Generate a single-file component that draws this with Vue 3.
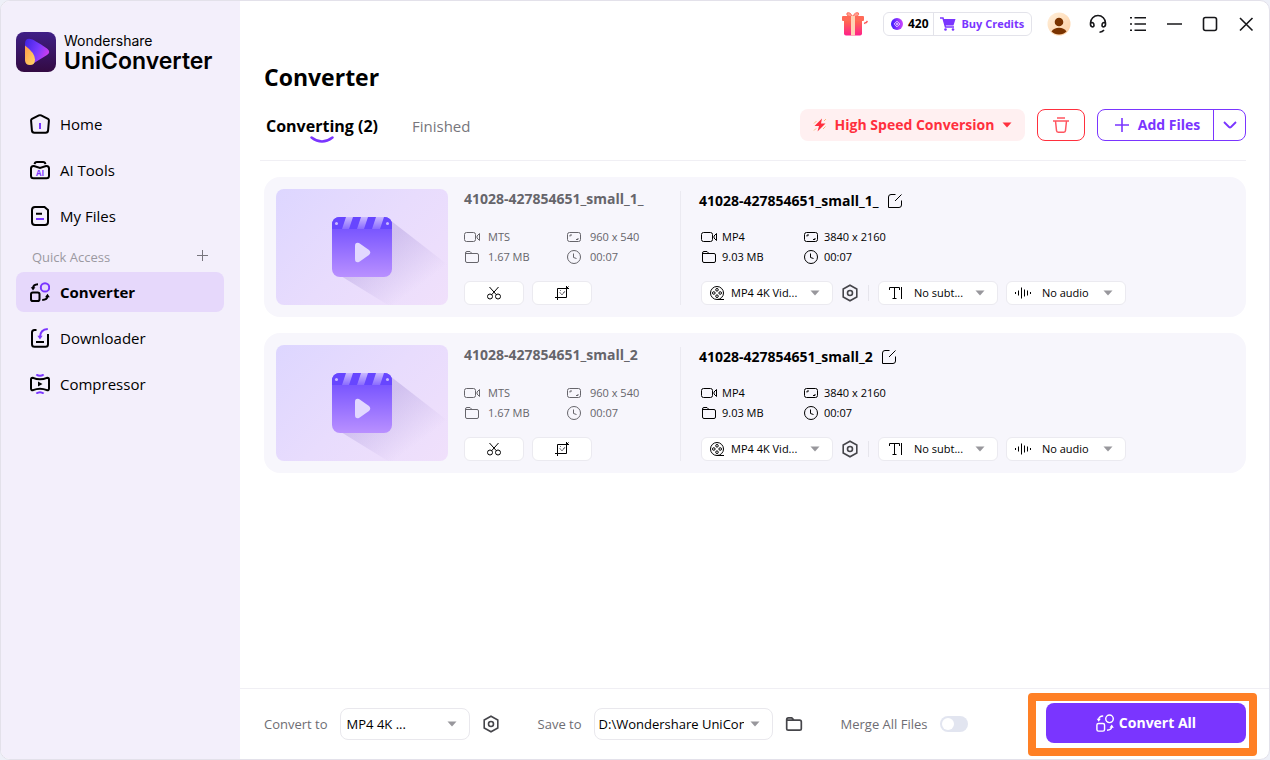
<template>
    <svg class="sprite" width="0" height="0" aria-hidden="true">
        <defs>
            <linearGradient id="g_logo_bg" x1="0" y1="0" x2="0" y2="1">
                <stop offset="0" stop-color="#3f1f86" />
                <stop offset="1" stop-color="#330a42" />
            </linearGradient>
            <linearGradient id="g_logo_play" x1="0" y1="0" x2="1" y2="0.4">
                <stop offset="0" stop-color="#3d22e0" />
                <stop offset="0.6" stop-color="#7a3bff" />
                <stop offset="1" stop-color="#c63df0" />
            </linearGradient>
            <linearGradient id="g_logo_leaf" x1="0" y1="0" x2="1" y2="1">
                <stop offset="0" stop-color="#ff9a4a" />
                <stop offset="1" stop-color="#ffd768" />
            </linearGradient>
            <linearGradient id="g_gift" x1="0" y1="0" x2="0" y2="1">
                <stop offset="0" stop-color="#ff6a50" />
                <stop offset="1" stop-color="#ff1f8a" />
            </linearGradient>
            <linearGradient id="g_coin" x1="0" y1="0" x2="1" y2="0">
                <stop offset="0" stop-color="#3a1cff" />
                <stop offset="1" stop-color="#d045ff" />
            </linearGradient>
            <linearGradient id="g_clap" x1="0" y1="0" x2="0" y2="1">
                <stop offset="0" stop-color="#6a48ff" />
                <stop offset="1" stop-color="#b990ff" />
            </linearGradient>
            <linearGradient id="g_strip" x1="0" y1="0" x2="0" y2="1">
                <stop offset="0" stop-color="#c9b8ff" />
                <stop offset="1" stop-color="#8a6bff" />
            </linearGradient>
            <linearGradient id="g_shadow" x1="0" y1="0" x2="1" y2="1">
                <stop offset="0.35" stop-color="#8a70c8" stop-opacity="0.26" />
                <stop offset="0.76" stop-color="#8a70c8" stop-opacity="0" />
            </linearGradient>
            <linearGradient id="g_avatar" x1="0" y1="0" x2="1" y2="1">
                <stop offset="0" stop-color="#fff0dc" />
                <stop offset="1" stop-color="#ffcfa0" />
            </linearGradient>
        </defs>
        <symbol id="i_home" viewBox="0 0 20 20">
            <path d="M8.9 1.4 2 4.9Q1 5.5 1.1 6.8L1.9 16.4Q2.1 18.8 4.4 18.8H15.6Q17.9 18.8 18.1 16.4L18.9 6.8Q19 5.5 18 4.9L11.1 1.4Q10 .9 8.9 1.4Z" />
            <path class="violet" d="M10 9V15" />
        </symbol>
        <symbol id="i_ai" viewBox="0 0 20 20">
            <path d="M4 6H3.5Q1 6 1 8.5V15.7Q1 18.2 3.5 18.2H16.5Q19 18.2 19 15.7V8.5Q19 6 16.5 6H16L10 8 4 6Z" />
            <path d="M4.6 4.2Q4.8 2 7 2H13Q15.2 2 15.4 4.2" />
        </symbol>
        <symbol id="i_files" viewBox="0 0 20 20">
            <path d="M5 1H14.5L18 4V16Q18 19 15 19H5Q2 19 2 16V4Q2 1 5 1Z" />
            <path d="M6 7.8H12" />
            <path class="violet" d="M6 13H14" />
        </symbol>
        <symbol id="i_convert" viewBox="0 0 20 20">
            <rect x="1" y="10.5" width="8.5" height="8.5" rx="1.8" />
            <circle class="violet" cx="15" cy="5.4" r="4.2" />
            <path d="M3 6Q3.2 2.4 8 2.2M17.5 14.5Q17.2 17.8 12.2 18" />
            <path class="solid" d="M.8 5.2H5.4L3 8.6ZM15 15.2H19.8L17.5 11.8Z" />
        </symbol>
        <symbol id="i_download" viewBox="0 0 20 20">
            <path d="M6.5 2H4.5Q2 2 2 4.5V16.3Q2 18.8 4.5 18.8H15.5Q18 18.8 18 16.3V6" />
            <path d="M6 14H14" />
            <path class="violet" d="M17.8 1Q10.2 1.5 10 9" />
            <path class="violet_solid" d="M7.4 7.8H12.6L10 11.5Z" />
        </symbol>
        <symbol id="i_compress" viewBox="0 0 20 20">
            <path d="M3 3.8Q10 6.8 17 3.8Q19 3.6 19 5.5V14.5Q19 16.4 17 16.2Q10 13.2 3 16.2Q1 16.4 1 14.5V5.5Q1 3.6 3 3.8Z" />
            <path class="violet" d="M6.3 .5Q10 3.2 13.7 .5M6.3 19.5Q10 16.8 13.7 19.5" />
            <path class="solid" d="M8 7.5V12.500L12.500 10Z" />
        </symbol>
        <symbol id="i_video" viewBox="0 0 16 16">
            <rect x=".5" y="3.5" width="11" height="9" rx="2" />
            <path d="M13 7 15.5 4.5V11.5L13 9Z" />
        </symbol>
        <symbol id="i_folder" viewBox="0 0 16 16">
            <path d="M1.5 12V4Q1.5 2.5 3 2.5H6L8 4.5H13Q14.5 4.5 14.5 6V12Q14.5 13.5 13 13.5H3Q1.5 13.5 1.5 12ZM1.5 4.5H8" />
        </symbol>
        <symbol id="i_ratio" viewBox="0 0 16 16">
            <rect x="1.5" y="3.5" width="13" height="9" rx="2" />
            <path d="M4 7.5V6H6M10 10.5H12V9" />
        </symbol>
        <symbol id="i_clock" viewBox="0 0 16 16">
            <circle cx="8" cy="8" r="6.5" />
            <path d="M7.5 4.5V8.5L10.5 9.5" />
        </symbol>
        <symbol id="i_cut" viewBox="0 0 16 16">
            <circle cx="4" cy="11.5" r="2.5" />
            <circle cx="12" cy="11.5" r="2.5" />
            <path d="M3.5 2 10.3 9.7M12.5 2 5.7 9.7" />
        </symbol>
        <symbol id="i_crop" viewBox="0 0 16 16">
            <path d="M3.5 3.5H12.5V12.5H3.5ZM12.5 1V3.5H15M1 12.5H3.5V15M12.5 3.5 14.5 1.5" />
            <path class="faint" d="M5.5 7 8 10 11 6M6 5.5H7M9 7.5H10.5" />
        </symbol>
        <symbol id="i_edit" viewBox="0 0 16 16">
            <path d="M8.5 1.5H4Q1.5 1.5 1.5 4V14.5H12Q14.5 14.5 14.5 12V7.5M8 8 14.5 1.5" />
        </symbol>
        <symbol id="i_reel" viewBox="0 0 16 16">
            <circle cx="8" cy="8" r="6.5" />
            <circle cx="8" cy="4.8" r="1.3" />
            <circle cx="8" cy="11.2" r="1.3" />
            <circle cx="4.8" cy="8" r="1.3" />
            <circle cx="11.2" cy="8" r="1.3" />
            <path d="M8 14.5H15" />
        </symbol>
        <symbol id="i_title" viewBox="0 0 22 16">
            <path d="M3.5 5V2.5H13.5V5M8.5 2.5V13.5M6.5 13.5H10.5M15.5 2V14" />
        </symbol>
        <symbol id="i_wave" viewBox="0 0 22 16">
            <path d="M1.5 7V9M4.5 5.5V10.5M7.5 2.5V13.5M10.5 4.5V11.5M13.5 5.5V10.5M16.5 7V9" />
        </symbol>
        <symbol id="i_gear" viewBox="0 0 18 18">
            <path d="M9 1.2 15.8 5V13L9 16.8 2.2 13V5Z" />
            <circle cx="9" cy="9" r="2.5" />
        </symbol>
        <symbol id="i_caret" viewBox="0 0 10 6">
            <path d="M.5 .5H9.5L5 5.5Z" />
        </symbol>
    </svg>

    <div class="window">
        <aside class="sidebar">
            <div class="brand">
                <svg width="40" height="40" viewBox="0 0 40 40">
                    <rect width="40" height="40" rx="8" fill="url(#g_logo_bg)" />
                    <path d="M9 12Q9 6 14.500 7Q17 7 31 16.500Q35.500 20 31 23L18 31Q12 33 9 28Z" fill="url(#g_logo_play)" />
                    <path d="M9 13.500Q19 21 19 27.500Q19 33 14 33Q9 33 9 28Z" fill="url(#g_logo_leaf)" />
                </svg>
                <div class="brand_text">
                    <span>Wondershare</span>
                    <strong>UniConverter</strong>
                </div>
            </div>
            <nav>
                <a v-for="item in main_nav" :key="item.label" href="#" class="nav_item">
                    <svg class="nav_icon" viewBox="0 0 20 20">
                        <use :href="item.icon" />
                        <text v-if="item.mark" x="10" y="16" text-anchor="middle">{{ item.mark }}</text>
                    </svg>
                    {{ item.label }}
                </a>
                <div class="quick">
                    <span>Quick Access</span>
                    <button type="button" aria-label="Add">
                        <svg width="11" height="11" viewBox="0 0 11 11"><path d="M5.5 0V11M0 5.5H11" stroke="#77757d" /></svg>
                    </button>
                </div>
                <a
                v-for="item in quick_nav"
                :key="item.label"
                href="#"
                class="nav_item"
                :class="{ active: item.label == current }"
                @click.prevent="current = item.label"
                >
                    <svg class="nav_icon"><use :href="item.icon" /></svg>
                    {{ item.label }}
                </a>
            </nav>
        </aside>

        <main class="main">
            <header class="topbar">
                <button type="button" class="gift" aria-label="Gifts">
                    <svg width="28" height="26" viewBox="0 0 28 26">
                        <path d="M12.500 5.500Q6 6 7 2Q10 .5 12.500 5.500Q15.500 .5 18.500 2Q19.500 6 12.500 5.500" fill="#ff9c8c" stroke="#ff6c5c" />
                        <rect x="2" y="5" width="22" height="5" rx="1" fill="#ff6a58" />
                        <path d="M4 10H22V22.500Q22 24.500 20 24.500H6Q4 24.500 4 22.500Z" fill="url(#g_gift)" />
                        <path d="M11 5H15V24.500H11Z" fill="#ffd2b4" />
                        <path d="M24.500 13 25.500 11M26 12 27.500 10" stroke="#ff5a5a" stroke-width="1.500" />
                    </svg>
                </button>
                <div class="credits">
                    <span class="balance">
                        <svg width="12" height="12" viewBox="0 0 12 12">
                            <circle cx="6" cy="6" r="6" fill="url(#g_coin)" />
                            <path d="M6 3.200 8.800 6 6 8.800 3.200 6Z" fill="none" stroke="#e4d4ff" />
                            <circle cx="6" cy="6" r="1" fill="#e4d4ff" />
                        </svg>
                        420
                    </span>
                    <button type="button" class="buy">
                        <svg width="16" height="14" viewBox="0 0 16 14">
                            <path d="M0 1H3L5.500 10H14" fill="none" stroke="#7a35ff" stroke-width="1.500" />
                            <path d="M3.200 2H15.500L13.500 8.500H5Z" fill="#7a35ff" />
                            <circle cx="5.500" cy="12.500" r="1.300" fill="#7a35ff" />
                            <circle cx="13" cy="12.500" r="1.300" fill="#7a35ff" />
                        </svg>
                        Buy Credits
                    </button>
                </div>
                <button type="button" aria-label="Account">
                    <svg width="24" height="24" viewBox="0 0 24 24">
                        <circle cx="12" cy="12" r="11.500" fill="url(#g_avatar)" />
                        <circle cx="12" cy="10" r="4.300" fill="#7a3300" />
                        <path d="M4.500 19.500Q7 15.800 12 15.800T19.500 19.500Q16.500 22.500 12 22.500T4.500 19.500Z" fill="#7a3300" />
                    </svg>
                </button>
                <div class="window_actions">
                    <button type="button" aria-label="Support">
                        <svg class="line" width="24" height="20" viewBox="0 0 24 20">
                            <path d="M4.500 11V9A7.500 7.500 0 0 1 19.500 9V11M4.500 9Q8 7.500 8 11.500Q7.500 13.500 5.500 12.500Q4.200 11.500 4.500 9M19.500 9Q16 7.500 16 11.500Q16.500 13.500 18.500 12.500Q19.800 11.500 19.500 9M18 16Q16.500 18 13.500 18.200" />
                        </svg>
                    </button>
                    <button type="button" aria-label="Menu">
                        <svg class="line" width="16" height="16" viewBox="0 0 16 16"><path d="M4.500 1.800H16M4.500 8H16M4.500 14.200H16M0 1.800H2M0 8H2M0 14.200H2" /></svg>
                    </button>
                    <button type="button" aria-label="Minimize">
                        <svg class="line" width="16" height="16" viewBox="0 0 16 16"><path d="M1 8H16" /></svg>
                    </button>
                    <button type="button" aria-label="Maximize">
                        <svg class="line" width="16" height="16" viewBox="0 0 16 16"><rect x="1.500" y="1.500" width="13" height="13" rx="2" /></svg>
                    </button>
                    <button type="button" aria-label="Close">
                        <svg class="line" width="16" height="16" viewBox="0 0 16 16"><path d="M2 2 14.500 14.500M14.500 2 2 14.500" /></svg>
                    </button>
                </div>
            </header>

            <section class="content">
                <h1>Converter</h1>
                <div class="toolbar">
                    <div class="tabs">
                        <button type="button" class="tab selected">
                            Converting (2)
                            <svg class="smile" width="24" height="8" viewBox="0 0 24 8"><path d="M1.500 1.500Q12 9.500 22.500 1.500" /></svg>
                        </button>
                        <button type="button" class="tab">Finished</button>
                    </div>
                    <div class="actions">
                        <button type="button" class="speed">
                            <svg width="14" height="14" viewBox="0 0 14 14">
                                <path d="M9 .5 1.500 8H6L4.500 13.500 12.500 5.500H8Z" fill="#ff2f3d" />
                                <path d="M1 5.500 3.500 3M10 11 12.500 8.500M1 12.500 3 10.500M11 3 13 1" stroke="#f6bd7b" />
                            </svg>
                            High Speed Conversion
                            <svg width="10" height="6"><use href="#i_caret" /></svg>
                        </button>
                        <button type="button" class="trash" aria-label="Delete all">
                            <svg width="16" height="16" viewBox="0 0 16 16">
                                <path d="M0 4H16M4 1H12M2.500 4 3.500 13.500Q3.600 15.200 5.200 15.200H10.800Q12.400 15.200 12.500 13.500L13.500 4" fill="none" stroke="#ff5560" stroke-width="1.500" />
                            </svg>
                        </button>
                        <div class="add">
                            <button type="button" class="add_files">
                                <svg width="14" height="14" viewBox="0 0 14 14"><path d="M7 0V14M0 7H14" stroke="#7a35ff" stroke-width="1.600" /></svg>
                                Add Files
                            </button>
                            <button type="button" class="add_more" aria-label="More sources">
                                <svg width="14" height="8" viewBox="0 0 14 8"><path d="M1 1 6 6Q7 7 8 6L13 1" fill="none" stroke="#7a35ff" stroke-width="1.800" /></svg>
                            </button>
                        </div>
                    </div>
                </div>

                <article v-for="(file, index) in files" :key="file.name" class="card">
                    <svg class="thumb" width="172" height="116" viewBox="0 0 172 116">
                        <path d="M114 31 172 76V116H112L60 84Z" fill="url(#g_shadow)" />
                        <rect x="56" y="28" width="60" height="60" rx="8" fill="url(#g_clap)" />
                        <path d="M56 40V36Q56 28 64 28H108Q116 28 116 36V40Z" fill="#6746ff" />
                        <path d="M70 28H77L73 40H66ZM85 28H92L88 40H81ZM100 28H108L104 40H96Z" fill="url(#g_strip)" />
                        <circle cx="60.500" cy="34.500" r="1.500" fill="#c9b8ff" />
                        <circle cx="111.500" cy="34.500" r="1.500" fill="#c9b8ff" />
                        <path d="M79 57Q79 53 83 54L93 61Q95.500 63.500 93 66L83 73Q79 74 79 70Z" fill="#e2d8ff" />
                    </svg>
                    <div class="source">
                        <h2>{{ file.name }}</h2>
                        <ul class="meta">
                            <li v-for="row in file.source" :key="row.icon">
                                <svg><use :href="row.icon" /></svg>{{ row.text }}
                            </li>
                        </ul>
                        <div class="controls">
                            <button type="button" class="tool" aria-label="Trim"><svg><use href="#i_cut" /></svg></button>
                            <button type="button" class="tool" aria-label="Crop"><svg><use href="#i_crop" /></svg></button>
                        </div>
                    </div>
                    <div class="target">
                        <h2>
                            {{ file.name }}
                            <button type="button" aria-label="Rename"><svg><use href="#i_edit" /></svg></button>
                        </h2>
                        <ul class="meta">
                            <li v-for="row in file.target" :key="row.icon">
                                <svg><use :href="row.icon" /></svg>{{ row.text }}
                            </li>
                        </ul>
                        <div class="controls">
                            <label class="picker format" :for="'format_' + index">
                                <svg><use href="#i_reel" /></svg>
                                <select :id="'format_' + index" aria-label="Format"><option>MP4 4K Vid...</option></select>
                                <svg class="caret"><use href="#i_caret" /></svg>
                            </label>
                            <button type="button" class="gear" aria-label="Format settings"><svg><use href="#i_gear" /></svg></button>
                            <span class="separator"></span>
                            <label class="picker" :for="'subtitle_' + index">
                                <svg class="wide"><use href="#i_title" /></svg>
                                <select :id="'subtitle_' + index" aria-label="Subtitle"><option>No subt...</option></select>
                                <svg class="caret"><use href="#i_caret" /></svg>
                            </label>
                            <label class="picker" :for="'audio_' + index">
                                <svg class="wide"><use href="#i_wave" /></svg>
                                <select :id="'audio_' + index" aria-label="Audio"><option>No audio</option></select>
                                <svg class="caret"><use href="#i_caret" /></svg>
                            </label>
                        </div>
                    </div>
                </article>
            </section>

            <footer class="bottom">
                <div class="field">
                    <label for="convert_to">Convert to</label>
                    <div class="dropdown">
                        <select id="convert_to"><option>MP4 4K ...</option></select>
                        <svg class="caret"><use href="#i_caret" /></svg>
                    </div>
                    <button type="button" class="gear" aria-label="Output settings"><svg><use href="#i_gear" /></svg></button>
                </div>
                <div class="field">
                    <label for="save_to">Save to</label>
                    <div class="dropdown path">
                        <select id="save_to"><option>D:\Wondershare UniConverter</option></select>
                        <svg class="caret"><use href="#i_caret" /></svg>
                    </div>
                    <button type="button" class="open" aria-label="Open folder"><svg><use href="#i_folder" /></svg></button>
                </div>
                <div class="field">
                    <label for="merge">Merge All Files</label>
                    <input id="merge" v-model="merge" type="checkbox" class="toggle">
                </div>
                <div class="convert_wrap">
                    <button type="button" class="convert_all">
                        <svg class="nav_icon"><use href="#i_convert" /></svg>
                        Convert All
                    </button>
                    <span class="highlight"></span>
                </div>
            </footer>
        </main>
    </div>
</template>

<script setup>
import { ref } from 'vue'


const current = ref('Converter')
const merge = ref(false)

const main_nav = [
    { label: 'Home', icon: '#i_home' },
    { label: 'AI Tools', icon: '#i_ai', mark: 'AI' },
    { label: 'My Files', icon: '#i_files' },
]
const quick_nav = [
    { label: 'Converter', icon: '#i_convert' },
    { label: 'Downloader', icon: '#i_download' },
    { label: 'Compressor', icon: '#i_compress' },
]

const meta = (format, ratio, size, time) => [
    { icon: '#i_video', text: format },
    { icon: '#i_ratio', text: ratio },
    { icon: '#i_folder', text: size },
    { icon: '#i_clock', text: time },
]
const files = ['41028-427854651_small_1_', '41028-427854651_small_2'].map(name => ({
    name,
    source: meta('MTS', '960 x 540', '1.67 MB', '00:07'),
    target: meta('MP4', '3840 x 2160', '9.03 MB', '00:07'),
}))
</script>

<style>
body {
    margin: 0;
    background: #eef0f8;
}
</style>

<style scoped>
.sprite {
    position: absolute;
}
.sprite .violet {
    stroke: var(--accent, #7a35ff);
}
.sprite .solid {
    fill: currentColor;
    stroke: none;
}
.sprite .violet_solid {
    fill: #7a35ff;
    stroke: none;
}
.sprite .faint {
    stroke: #77767c;
}
.window {
    display: flex;
    box-sizing: border-box;
    height: 100vh;
    overflow: hidden;
    border: 1px solid #e3e1ea;
    border-radius: 10px;
    background: white;
    color: black;
    font: 14px/20px "Open Sans", "Noto Sans", sans-serif;
}
button {
    display: flex;
    align-items: center;
    justify-content: center;
    box-sizing: border-box;
    margin: 0;
    padding: 0;
    border: 0;
    background: none;
    color: inherit;
    font: inherit;
    white-space: nowrap;
    cursor: pointer;
}
svg {
    flex: none;
    display: block;
}
select {
    appearance: none;
    flex: 1;
    min-width: 0;
    padding: 0;
    border: 0;
    outline: 0;
    background: none;
    color: black;
    font: inherit;
}
.sidebar {
    flex: none;
    box-sizing: border-box;
    width: 239px;
    padding: 31px 16px 0 15px;
    background: #f3effb;
}
.brand {
    display: flex;
    gap: 8px;
    margin-bottom: 32px;
}
.brand_text {
    display: flex;
    flex-direction: column;
    font-family: Inter, sans-serif;
}
.brand_text span {
    font-size: 14px;
    line-height: 18px;
}
.brand_text strong {
    font-size: 23px;
    line-height: 22px;
    font-weight: 600;
}
.nav_item {
    display: flex;
    align-items: center;
    gap: 10px;
    height: 40px;
    padding-left: 14px;
    border-radius: 8px;
    color: black;
    font-size: 15px;
    text-decoration: none;
}
.nav_item + .nav_item {
    margin-top: 6px;
}
.nav_item.active {
    background: #e6d8fb;
    font-weight: bold;
}
.nav_icon {
    width: 20px;
    height: 20px;
    fill: none;
    stroke: currentColor;
    stroke-width: 2;
}
.nav_icon text {
    font: bold 8px "Open Sans", sans-serif;
    fill: #7a35ff;
    stroke: none;
}
.quick {
    display: flex;
    align-items: center;
    justify-content: space-between;
    box-sizing: border-box;
    height: 36px;
    padding: 6px 16px 0;
    color: #9b99a1;
    font-size: 13px;
}
.quick button {
    padding-bottom: 4px;
}
.main {
    flex: 1;
    display: flex;
    flex-direction: column;
    min-width: 0;
}
.topbar {
    display: flex;
    align-items: center;
    justify-content: flex-end;
    gap: 15px;
    height: 46px;
    padding-right: 15px;
}
.credits {
    display: flex;
    box-sizing: border-box;
    width: 149px;
    height: 24px;
    border: 1px solid #e3e3ea;
    border-radius: 6px;
    font-size: 12px;
    font-weight: bold;
}
.balance {
    display: flex;
    align-items: center;
    gap: 5px;
    padding: 0 4px 0 7px;
    border-right: 1px solid #e3e3ea;
}
.buy {
    flex: 1;
    gap: 5px;
    color: #7a35ff;
    font-size: 11px;
}
.window_actions {
    display: flex;
    align-items: center;
    gap: 20px;
}
.line {
    fill: none;
    stroke: #17171a;
    stroke-width: 1.6;
}
.content {
    flex: 1;
    min-height: 0;
    padding: 14px 23px 0 24px;
}
h1 {
    margin: 0;
    font-size: 23px;
    line-height: 32px;
}
.toolbar {
    display: flex;
    align-items: center;
    justify-content: space-between;
    margin: 16px 0 16px -4px;
    padding: 0 0 19px 6px;
    border-bottom: 1px solid #f0eff4;
}
.tabs {
    display: flex;
    gap: 34px;
    height: 32px;
}
.tab {
    position: relative;
    padding-top: 2px;
    color: #77767c;
    font-size: 15px;
}
.tab.selected {
    color: black;
    font-size: 16px;
    font-weight: bold;
}
.smile {
    position: absolute;
    bottom: -3px;
    left: 50%;
    margin-left: -12px;
    fill: none;
    stroke: #7a35ff;
    stroke-width: 2.5;
    stroke-linecap: round;
}
.actions {
    display: flex;
    gap: 12px;
    height: 32px;
    font-weight: bold;
}
.speed {
    gap: 8px;
    width: 225px;
    border-radius: 8px;
    background: #fff0f1;
    color: #ff2f3d;
    fill: #ff2f3d;
}
.trash {
    width: 48px;
    border: 1px solid #ff2f3d;
    border-radius: 8px;
}
.add {
    display: flex;
    box-sizing: border-box;
    width: 149px;
    border: 1px solid #7a35ff;
    border-radius: 8px;
    color: #7a35ff;
}
.add_files {
    flex: 1;
    gap: 9px;
    padding-left: 4px;
}
.add_more {
    width: 32px;
    border-left: 1px solid #7a35ff;
}
.card {
    display: flex;
    margin-bottom: 16px;
    padding: 12px;
    border-radius: 16px;
    background: #f7f6fc;
}
.thumb {
    border-radius: 8px;
    background: linear-gradient(135deg, #ddd6ff, #e8dcfd 50%, #f0e0fb);
}
.source {
    box-sizing: border-box;
    width: 216px;
    margin: 2px 0 0 16px;
    color: #66656b;
}
.target {
    flex: 1;
    margin-top: 2px;
    padding-left: 18px;
    border-left: 1px solid #ebeaf1;
}
.card h2 {
    display: flex;
    align-items: center;
    gap: 8px;
    height: 16px;
    margin: 0;
    font-size: 14px;
}
.card .target h2 {
    height: 20px;
}
.meta {
    display: grid;
    grid-template-columns: 102px 110px;
    margin: 20px 0 14px;
    padding: 0;
    list-style: none;
    font-size: 11px;
}
.meta li {
    display: flex;
    align-items: center;
    gap: 8px;
    height: 20px;
}
.target .meta,
.target .controls {
    padding-left: 2px;
}
.target .meta {
    margin-top: 16px;
}
.target .meta li {
    gap: 5px;
}
.card svg:not(.thumb) {
    width: 16px;
    height: 16px;
    fill: none;
    stroke: currentColor;
}
.controls {
    display: flex;
    align-items: center;
    gap: 8px;
    color: black;
    font-size: 11px;
}
.tool,
.picker {
    box-sizing: border-box;
    height: 24px;
    border: 1px solid #ebeaf0;
    border-radius: 6px;
    background: white;
}
.tool {
    width: 60px;
}
.picker {
    display: flex;
    align-items: center;
    gap: 6px;
    width: 120px;
    padding: 0 12px 0 7px;
}
.picker.format {
    width: 132px;
}
.card svg.wide {
    width: 22px;
}
.caret,
.card svg.caret:not(.thumb) {
    width: 10px;
    height: 6px;
    fill: #98979c;
    stroke: none;
    pointer-events: none;
}
.gear svg,
.card .gear svg:not(.thumb) {
    width: 18px;
    height: 18px;
    fill: none;
    stroke: #45454a;
    stroke-width: 1.6;
}
.separator {
    width: 1px;
    height: 16px;
    margin: 0 1px;
    background: #e6e5ec;
}
.bottom {
    display: flex;
    align-items: center;
    gap: 38px;
    box-sizing: border-box;
    height: 71px;
    padding: 0 23px 0 24px;
    border-top: 1px solid #f0eff4;
}
.field {
    display: flex;
    align-items: center;
    gap: 12px;
    color: #6e6d73;
    font-size: 13px;
    white-space: nowrap;
}
.dropdown {
    display: flex;
    align-items: center;
    box-sizing: border-box;
    width: 130px;
    height: 32px;
    padding: 0 12px 0 6px;
    border: 1px solid #e9e8ed;
    border-radius: 8px;
}
.dropdown.path {
    gap: 6px;
    width: 179px;
    padding-left: 4px;
}
.open svg {
    width: 18px;
    height: 20px;
    fill: none;
    stroke: #45454a;
    stroke-width: 1.5;
}
.toggle {
    appearance: none;
    width: 28px;
    height: 16px;
    margin: 0;
    padding: 2px;
    border-radius: 8px;
    background: #e2e5f0;
}
.toggle::before {
    content: "";
    display: block;
    width: 12px;
    height: 12px;
    border-radius: 50%;
    background: white;
}
.toggle:checked {
    background: #7a35ff;
}
.toggle:checked::before {
    margin-left: 12px;
}
.convert_wrap {
    position: relative;
    margin: -2px 0 0 auto;
}
.convert_all {
    --accent: white;
    gap: 5px;
    width: 200px;
    height: 40px;
    border-radius: 8px;
    background: #7a35ff;
    color: white;
    font-weight: bold;
}
.convert_all svg {
    width: 18px;
    height: 18px;
    stroke-width: 1.6;
}
.highlight {
    position: absolute;
    inset: -10px -11px -13px -18px;
    border: 8px solid #ff8025;
    border-radius: 4px;
    pointer-events: none;
}
</style>
